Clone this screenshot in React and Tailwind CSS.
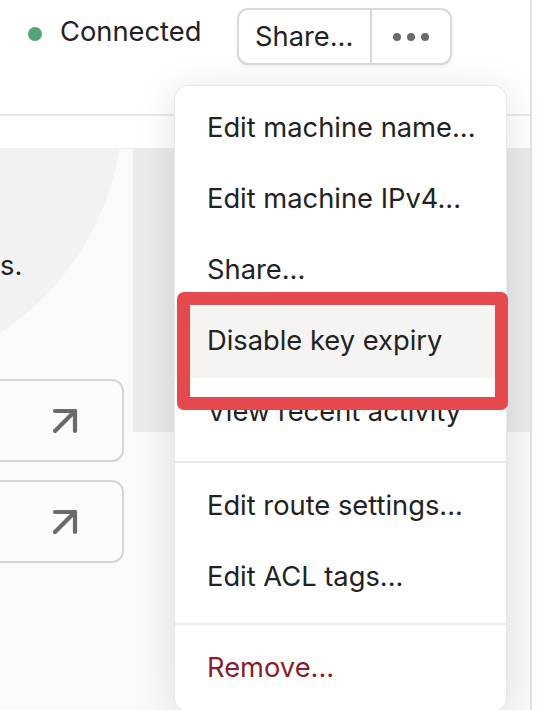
import React from "react";

function ArrowUpRight() {
  return (
    <svg width="48" height="48" viewBox="0 0 24 24" fill="none" stroke="#6b6b6b" strokeWidth="2.1" strokeLinecap="round" strokeLinejoin="round">
      <path d="M7 7h10v10" />
      <path d="M7 17 17 7" />
    </svg>
  );
}

function MenuItem({ children, active, danger }) {
  return (
    <div
      className={
        "h-[71px] flex items-center pl-[32px] pb-[3px] " +
        (active ? "bg-[#f5f4f3] " : "") +
        (danger ? "text-[#8c1d26]" : "text-[#222222]")
      }
    >
      {children}
    </div>
  );
}

export default function App() {
  return (
    <div className="relative w-[546px] h-[710px] overflow-hidden bg-white flex font-['Inter','Noto_Sans',sans-serif] text-[27.3px] leading-[34px] text-[#222222]">
      <div className="w-[530px] flex flex-col">
        {/* header */}
        <div className="h-[116px] border-b-2 border-[#ede9e8] flex items-start pl-[28px]">
          <div className="w-[209px] h-[63px] flex items-center gap-[18px]">
            <div className="w-[14px] h-[14px] rounded-full bg-[#4fa679] mt-[5px]" />
            <span>Connected</span>
          </div>
          <div className="mt-[8px] h-[57px] flex rounded-[11px] border-2 border-[#ddd7d5] bg-white shadow-[0_2px_5px_rgba(0,0,0,0.06)]">
            <div className="w-[131px] flex items-center pl-[16px]">Share...</div>
            <div className="w-[2px] bg-[#ddd7d5]" />
            <div className="w-[78px] flex items-center justify-center gap-[6px]">
              <span className="w-[8px] h-[8px] rounded-full bg-[#6b6b6b]" />
              <span className="w-[8px] h-[8px] rounded-full bg-[#6b6b6b]" />
              <span className="w-[8px] h-[8px] rounded-full bg-[#6b6b6b]" />
            </div>
          </div>
        </div>
        <div className="h-[32px] bg-white" />
        {/* content */}
        <div className="flex-1 flex flex-col bg-[#fafafa] border-t border-[#eeeeee]">
          <div className="flex h-[283px]">
            <div className="relative w-[133px] overflow-hidden">
              <svg className="absolute inset-0" width="133" height="283" viewBox="0 0 133 283">
                <rect width="133" height="283" fill="#fafafa" />
                <circle cx="-150" cy="-44" r="273" fill="#f2f2f2" />
              </svg>
              <div className="relative pt-[100px] leading-[34px]">s.</div>
            </div>
            <div className="flex-1 bg-[#ebebeb]" />
          </div>
        </div>
      </div>
      <div className="w-[2px] bg-[#e2e2e2]" />
      <div className="flex-1 bg-white" />

      {/* cards lying over the panel */}
      <div className="absolute left-[-40px] top-[379px] flex flex-col gap-[18px]">
        <div className="w-[164px] h-[83px] rounded-[12px] border-2 border-[#d7d4d2] bg-[#fcfcfc] flex items-center justify-end pr-[33px]">
          <ArrowUpRight />
        </div>
        <div className="w-[164px] h-[83px] rounded-[12px] border-2 border-[#d7d4d2] bg-[#fcfcfc] flex items-center justify-end pr-[33px]">
          <ArrowUpRight />
        </div>
      </div>

      {/* dropdown menu */}
      <div className="absolute left-[174px] top-[85px] w-[333px] rounded-[14px] bg-white border border-[#ebe8e7] shadow-[0_6px_40px_rgba(0,0,0,0.12)] pt-[8px] pb-[6px]">
        <MenuItem>Edit machine name...</MenuItem>
        <MenuItem>Edit machine IPv4...</MenuItem>
        <MenuItem>Share...</MenuItem>
        <MenuItem active>Disable key expiry</MenuItem>
        <MenuItem>View recent activity</MenuItem>
        <div className="h-[2px] bg-[#ede9e8] mt-[12px] mb-[9px]" />
        <MenuItem>Edit route settings...</MenuItem>
        <MenuItem>Edit ACL tags...</MenuItem>
        <div className="h-[2px] bg-[#ede9e8] mt-[9px] mb-[9px]" />
        <MenuItem danger>Remove...</MenuItem>
      </div>

      {/* annotation highlight */}
      <div className="absolute left-[177px] top-[292px] w-[331px] h-[118px] border-[13px] border-[#e5484d] rounded-[7px]" />
    </div>
  );
}
